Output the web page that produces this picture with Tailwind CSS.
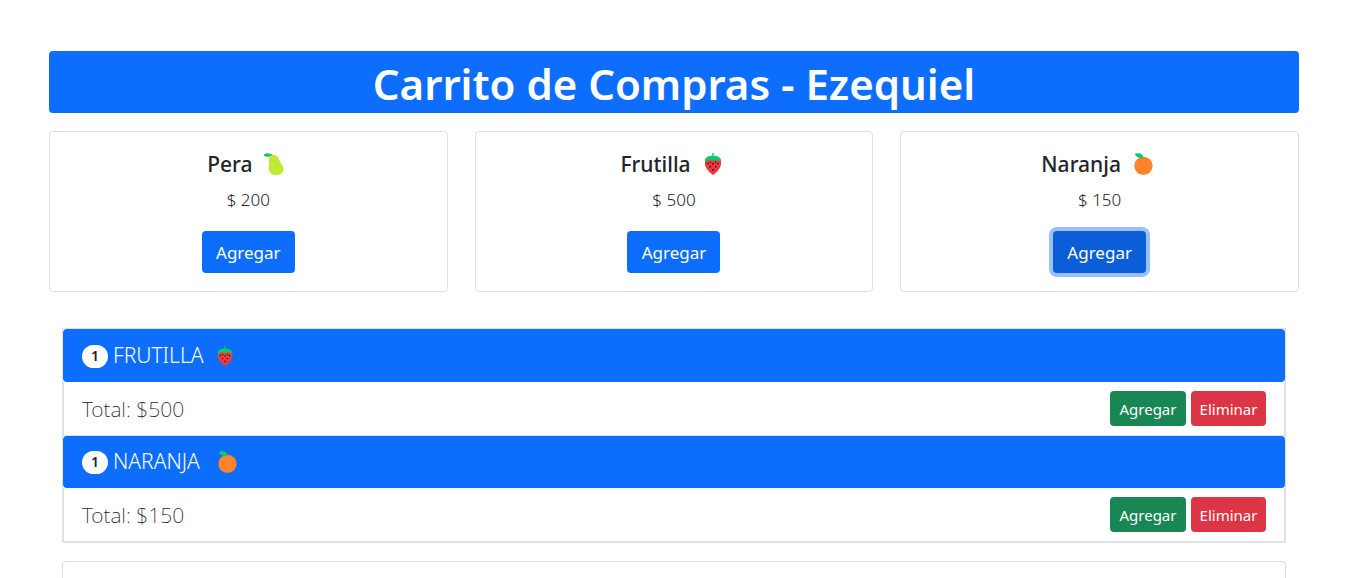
<!DOCTYPE html>
<html lang="es">
<head>
<meta charset="utf-8">
<meta name="viewport" content="width=device-width, initial-scale=1">
<title>Carrito de Compras</title>
<script src="https://cdn.jsdelivr.net/npm/@tailwindcss/browser@4"></script>
</head>
<body class="overflow-hidden bg-white font-['Noto_Sans',sans-serif] text-[#212529]">
<svg class="hidden" aria-hidden="true">
  <symbol id="pear" viewBox="0 0 24 24">
    <path d="M6 4C8 1 13 1 15.500 5C17 8 17 10 19.500 12.500C24 18 20 24 14 24C7 24 3.500 19 5.500 13.500C6.500 10 4.500 7 6 4Z" fill="#bfea32"/>
    <ellipse cx="3.700" cy="2.200" rx="3.700" ry="2" fill="#16c768"/>
    <path d="M6 2H9" stroke="#16a05c" stroke-width="1.200"/>
  </symbol>
  <symbol id="strawberry" viewBox="0 0 24 24">
    <path d="M3.500 8C5 4 19 4 20.500 8C22 15 18 20 12 24C6 20 2 15 3.500 8Z" fill="#f03a3a"/>
    <path d="M3 8.500C3.500 4 8 3 11.300 3V0H12.700V3C16 3 20.500 4 21 8.500C18 9.500 17 7.500 15.500 7.500C14 7.500 13.500 8.500 12 8.500C10.500 8.500 10 7.500 8.500 7.500C7 7.500 6 9.500 3 8.500Z" fill="#12c66c"/>
    <g fill="#321b41"><circle cx="6.500" cy="11.500" r="1"/><circle cx="12" cy="12" r="1"/><circle cx="17.500" cy="11.500" r="1"/><circle cx="9" cy="15" r="1"/><circle cx="15" cy="15" r="1"/><circle cx="12" cy="18.500" r="1"/><circle cx="9.200" cy="10.200" r=".8"/><circle cx="14.800" cy="10.200" r=".8"/></g>
  </symbol>
  <symbol id="orange" viewBox="0 0 24 24">
    <circle cx="12.500" cy="14" r="10" fill="#ff822d"/>
    <path d="M3 1C7-.5 12 .5 12.500 5.500C8.500 6 5 5 3 1Z" fill="#14c66b"/>
  </symbol>
</svg>
<div class="flex flex-col gap-[18px] pt-[51px] pr-[46px] pl-[49px]">
  <h1 class="rounded bg-[#0d6efd] pt-[6px] pb-[2px] text-center text-[42px] leading-[54px] font-semibold text-white">Carrito de Compras - Ezequiel</h1>
  <main>
    <section class="grid grid-cols-3 gap-[27px]" aria-label="Productos">
      <article class="flex flex-col items-center rounded border border-[#dfdfdf] py-[18px]">
        <h2 class="flex items-center gap-[11px] pr-1 text-[21px] leading-7 font-medium">Pera <svg class="size-[22px]" aria-hidden="true"><use href="#pear"/></svg></h2>
        <p class="mt-2 mb-[18px] text-[17px] leading-[27px] font-light">$ 200</p>
        <button type="button" class="h-[42px] w-[93px] rounded bg-[#0d6efd] pt-[2px] text-[17px] text-white">Agregar</button>
      </article>
      <article class="flex flex-col items-center rounded border border-[#dfdfdf] py-[18px]">
        <h2 class="flex items-center gap-[11px] pr-1 text-[21px] leading-7 font-medium">Frutilla <svg class="size-[22px]" aria-hidden="true"><use href="#strawberry"/></svg></h2>
        <p class="mt-2 mb-[18px] text-[17px] leading-[27px] font-light">$ 500</p>
        <button type="button" class="h-[42px] w-[93px] rounded bg-[#0d6efd] pt-[2px] text-[17px] text-white">Agregar</button>
      </article>
      <article class="flex flex-col items-center rounded border border-[#dfdfdf] py-[18px]">
        <h2 class="flex items-center gap-[11px] pr-1 text-[21px] leading-7 font-medium">Naranja <svg class="size-[22px]" aria-hidden="true"><use href="#orange"/></svg></h2>
        <p class="mt-2 mb-[18px] text-[17px] leading-[27px] font-light">$ 150</p>
        <button type="button" class="h-[42px] w-[93px] rounded bg-[#0b5ed7] pt-[2px] text-[17px] text-white ring-4 ring-[#98c1fe]">Agregar</button>
      </article>
    </section>
    <section class="mx-[13px] mt-9" aria-label="Carrito">
      <ul class="border border-b-2 border-[#dee2e6] text-[21px] font-light">
        <li>
          <div class="flex h-[53px] items-center rounded bg-[#0d6efd] px-[19px] pt-px text-white"><span class="mr-[5px] flex h-[23px] w-[26px] items-center justify-center rounded-full bg-white text-sm font-semibold text-[#212529]">1</span>FRUTILLA<svg class="ml-3 size-[20px]" aria-hidden="true"><use href="#strawberry"/></svg></div>
          <div class="flex h-[54px] items-center gap-[5px] border-x border-b border-[#dee2e6] px-[18px]"><span class="mr-auto pt-[2px] font-extralight">Total: $500</span><button type="button" class="h-[35px] w-[76px] rounded bg-[#198754] pt-[2px] text-[15px] font-normal text-white">Agregar</button><button type="button" class="h-[35px] w-[75px] rounded bg-[#dc3545] pt-[2px] text-[15px] font-normal text-white">Eliminar</button></div>
        </li>
        <li>
          <div class="flex h-[52px] items-center rounded bg-[#0d6efd] px-[19px] text-white"><span class="mr-[5px] flex h-[23px] w-[26px] items-center justify-center rounded-full bg-white text-sm font-semibold text-[#212529]">1</span>NARANJA<svg class="ml-4 size-[22px]" aria-hidden="true"><use href="#orange"/></svg></div>
          <div class="flex h-[53px] items-center gap-[5px] border-x border-[#dee2e6] px-[18px]"><span class="mr-auto pt-[2px] font-extralight">Total: $150</span><button type="button" class="h-[35px] w-[76px] rounded bg-[#198754] pt-[2px] text-[15px] font-normal text-white">Agregar</button><button type="button" class="h-[35px] w-[75px] rounded bg-[#dc3545] pt-[2px] text-[15px] font-normal text-white">Eliminar</button></div>
        </li>
      </ul>
      <div class="mt-[18px] h-9 rounded-t border border-b-0 border-[#dfdfdf]"></div>
    </section>
  </main>
</div>
</body>
</html>
